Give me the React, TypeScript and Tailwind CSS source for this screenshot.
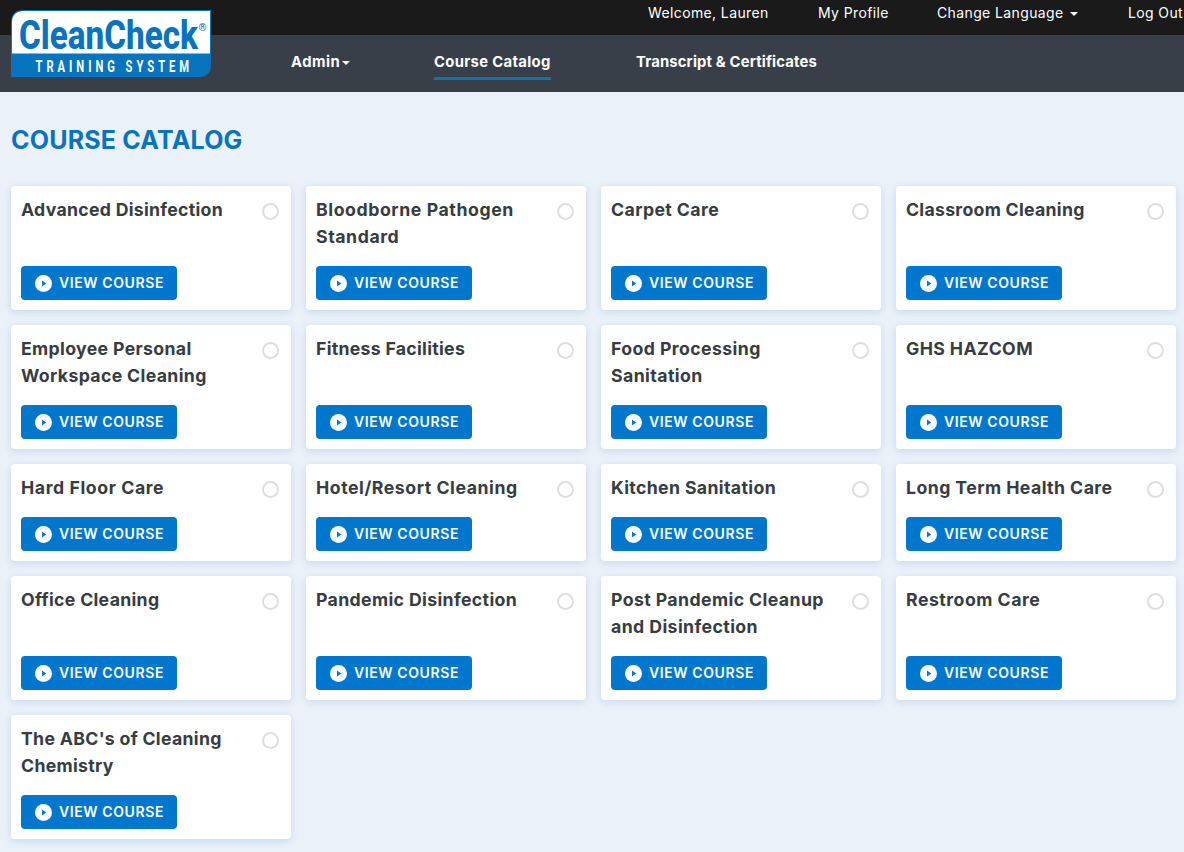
import clsx from 'clsx'

interface Course {
  title: string
  // letter spacing of the heading
  tracking: string
}

const courses: Course[] = [
  { title: 'Advanced Disinfection', tracking: 'tracking-[0.28px]' },
  { title: 'Bloodborne Pathogen Standard', tracking: 'tracking-[0.57px]' },
  { title: 'Carpet Care', tracking: 'tracking-[0.4px]' },
  { title: 'Classroom Cleaning', tracking: 'tracking-[0.28px]' },
  { title: 'Employee Personal Workspace Cleaning', tracking: 'tracking-[0.34px]' },
  { title: 'Fitness Facilities', tracking: 'tracking-[0.28px]' },
  { title: 'Food Processing Sanitation', tracking: 'tracking-[0.4px]' },
  { title: 'GHS HAZCOM', tracking: 'tracking-[0.4px]' },
  { title: 'Hard Floor Care', tracking: 'tracking-[0.58px]' },
  { title: 'Hotel/Resort Cleaning', tracking: 'tracking-[0.54px]' },
  { title: 'Kitchen Sanitation', tracking: 'tracking-[0.35px]' },
  { title: 'Long Term Health Care', tracking: 'tracking-[0.43px]' },
  { title: 'Office Cleaning', tracking: 'tracking-[0.3px]' },
  { title: 'Pandemic Disinfection', tracking: 'tracking-[0.35px]' },
  { title: 'Post Pandemic Cleanup and Disinfection', tracking: 'tracking-[0.4px]' },
  { title: 'Restroom Care', tracking: 'tracking-[0.5px]' },
  { title: "The ABC's of Cleaning Chemistry", tracking: 'tracking-[0.3px]' },
]

function Logo() {
  return (
    <svg width="201" height="68" viewBox="0 0 201 68" className="block font-['Roboto',sans-serif] font-bold">
      <path d="M13 0H200V55Q200 67 188 67H0V13Q0 0 13 0Z" fill="#0774bd" />
      <path d="M13 1H199V43.5H1V13Q1 1 13 1Z" fill="#fff" />
      <text x="8" y="39.3" fontSize="41" fontWeight="800" fill="#0774bd" textLength="179" lengthAdjust="spacingAndGlyphs">
        CleanCheck
      </text>
      <text x="187.5" y="20.5" fontSize="10" fontWeight="700" fill="#0774bd">
        ®
      </text>
      <g transform="translate(24.5 61.6) scale(.68 1)">
        <text fontSize="16.5" fontWeight="700" fill="#fff" textLength="226" lengthAdjust="spacing">
          TRAINING SYSTEM
        </text>
      </g>
    </svg>
  )
}

function Caret() {
  return (
    <svg width="8" height="4" viewBox="0 0 8 4" fill="currentColor">
      <path d="M0 0H8L4 4Z" />
    </svg>
  )
}

function PlayCircle() {
  return (
    <svg width="17" height="17" viewBox="0 0 17 17">
      <circle cx="8.5" cy="8.5" r="8.5" fill="#fff" />
      <path d="M7 5.6V11.4L11.3 8.5Z" fill="#0077cc" />
    </svg>
  )
}

function CourseCard({ course }: { course: Course }) {
  return (
    <article className="flex flex-col rounded bg-white p-2.5 shadow-[0_2px_8px_rgba(0,90,150,0.15)]">
      <div className="mb-4 flex items-start justify-between">
        <h2 className={clsx('w-[224px] text-[17.7px] leading-[27px] font-bold text-[#373c42]', course.tracking)}>
          {course.title}
        </h2>
        <span className="mt-[7px] mr-[2px] size-[17px] rounded-full border-2 border-[#dedede]" />
      </div>
      <a
        href="#"
        className="mt-auto flex h-[34px] w-[156px] items-center gap-[7px] rounded bg-[#0077cc] pl-3.5 text-sm font-semibold whitespace-nowrap text-white"
      >
        <PlayCircle />
        <span className="tracking-[0.6px]">VIEW COURSE</span>
      </a>
    </article>
  )
}

export default function App() {
  return (
    <div className="relative h-[852px] w-[1184px] overflow-hidden bg-[#eaf1f9] font-['Inter',sans-serif]">
      <header className="text-white">
        <div className="flex h-[35px] bg-[#1a1a1a] pl-[648px] text-sm leading-[26px] tracking-[0.38px] whitespace-nowrap">
          <a href="#" className="w-[170px] shrink-0">Welcome, Lauren</a>
          <a href="#" className="w-[119px] shrink-0">My Profile</a>
          <a href="#" className="flex w-[191px] shrink-0">
            <span className="w-[133px]">Change Language</span>
            <span className="pt-3"><Caret /></span>
          </a>
          <a href="#" className="shrink-0">Log Out</a>
        </div>
        <nav className="flex h-[57px] bg-[#383f49] pt-[15px] pl-[291px] text-[14.8px] leading-6 font-bold tracking-[0.34px] whitespace-nowrap">
          <a href="#" className="flex w-[143px]">
            <span className="w-[51px] tracking-[0.5px]">Admin</span>
            <span className="pt-[11px]"><Caret /></span>
          </a>
          <a href="#" className="mr-[85px] h-[30px] w-[117px] border-b-3 border-[#0774bd]">Course Catalog</a>
          <a href="#" className="tracking-[0.16px]">Transcript &amp; Certificates</a>
        </nav>
      </header>
      {/* logo straddles both header bars */}
      <div className="absolute top-[10px] left-[11px]">
        <Logo />
      </div>
      <main className="px-[11px] pt-[30px]">
        <h1 className="text-[25px] leading-9 font-bold tracking-[0.2px] text-[#0774bd]">COURSE CATALOG</h1>
        <div className="mt-7 grid grid-cols-[repeat(4,280px)] gap-[15px]">
          {courses.map((course) => (
            <CourseCard key={course.title} course={course} />
          ))}
        </div>
      </main>
    </div>
  )
}
